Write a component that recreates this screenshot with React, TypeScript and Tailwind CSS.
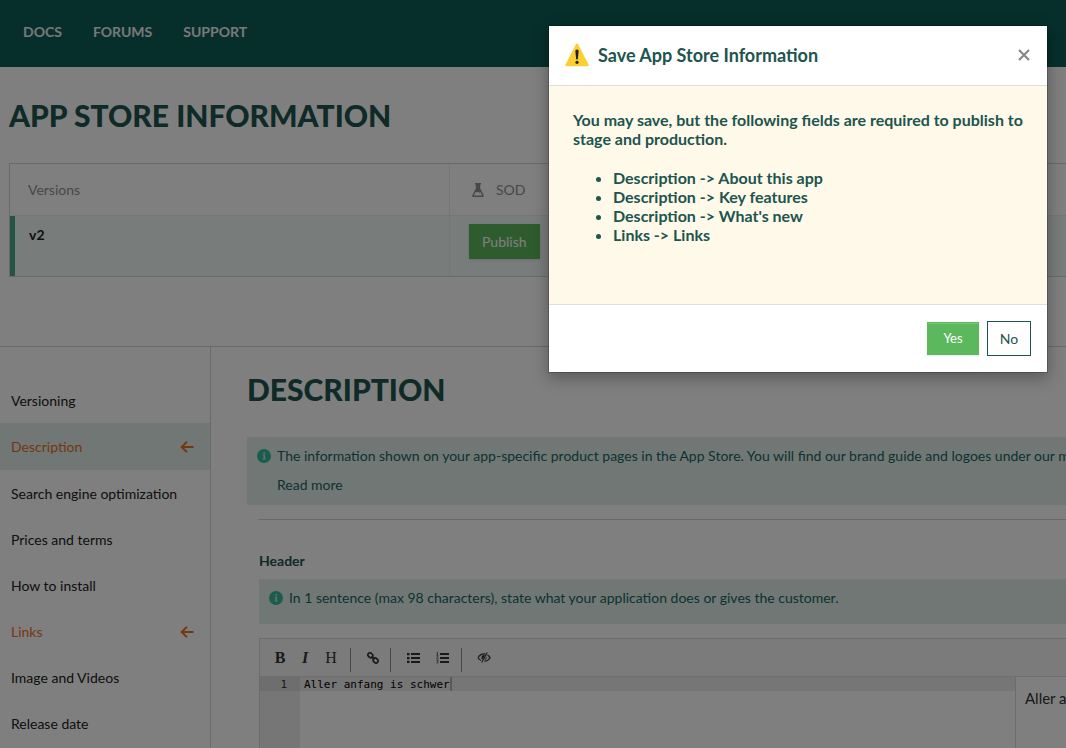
const sections = [
  { name: "Versioning" },
  { name: "Description", missing: true, active: true },
  { name: "Search engine optimization" },
  { name: "Prices and terms" },
  { name: "How to install" },
  { name: "Links", missing: true },
  { name: "Image and Videos" },
  { name: "Release date" },
];

const missingFields = [
  "Description -> About this app",
  "Description -> Key features",
  "Description -> What's new",
  "Links -> Links",
];

function InfoIcon() {
  return (
    <svg viewBox="0 0 14 14" className="h-3.5 w-3.5 shrink-0" aria-hidden="true">
      <circle cx="7" cy="7" r="7" fill="#34bb9b" />
      <path d="M6.400 3.300h1.500v1.400H6.400zM5.800 5.700h2.100v4h.7v.9H5.800v-.9h.7V6.600h-.7z" fill="#e2efeb" />
    </svg>
  );
}

function ArrowLeft() {
  return (
    <svg viewBox="0 0 14 12" className="h-3 w-3.5" fill="none" stroke="currentColor" strokeWidth="1.9" aria-hidden="true">
      <path d="M13.500 6H1.500M7 0.800L1.600 6 7 11.200" />
    </svg>
  );
}

function Flask() {
  return (
    <svg viewBox="0 0 12 14" className="h-3.5 w-3" aria-hidden="true">
      <path d="M3 0h6v1.500H8.200v4L11.600 12c.5 1.100-.1 2-1.200 2H1.600C.5 14-.1 13.100.4 12L3.800 5.500v-4H3z" fill="#909090" />
      <path d="M3.200 9.300h1.500L6 8.800l1.400 1 1.300-.5 1.400 3.200H1.900z" fill="#ffffff" />
    </svg>
  );
}

function LinkIcon() {
  return (
    <svg viewBox="0 0 12 12" className="h-3 w-3" fill="none" stroke="currentColor" strokeWidth="1.700" aria-hidden="true">
      <rect x="-2.600" y="-2" width="5.200" height="4" rx="1.700" transform="translate(3.400 3.300) rotate(45)" />
      <rect x="-2.600" y="-2" width="5.200" height="4" rx="1.700" transform="translate(8.600 8.500) rotate(45)" />
      <path d="M4.500 4.400l3 3" />
    </svg>
  );
}

function BulletList() {
  return (
    <svg viewBox="0 0 13 10" className="h-2.5 w-[13px]" fill="currentColor" aria-hidden="true">
      <path d="M0 0h2.500v2.200H0zM0 4h2.500v2.200H0zM0 7.800h2.500V10H0zM4 .1h9v1.900H4zM4 4.100h9V6H4zM4 8h9v1.900H4z" />
    </svg>
  );
}

function NumberList() {
  return (
    <svg viewBox="0 0 13 12" className="h-3 w-[13px]" fill="currentColor" aria-hidden="true">
      <path d="M4 1.100h9V3H4zM4 5.100h9V7H4zM4 9h9v1.900H4z" />
      <path d="M.5.700l1-.4V3.200M.4 3.300h2M.5 4.700c1.700-.7 2 .4.900 1.200l-.9.900h2M.5 8.400h1.700l-.8 1.100c1.500.2 1 2-.9 1.500" fill="none" stroke="currentColor" strokeWidth=".7" />
    </svg>
  );
}

function EyeSlash() {
  return (
    <svg viewBox="0 0 14 11" className="h-[11px] w-3.5" aria-hidden="true">
      <path d="M1 5.700C3 2.200 6 1.400 8.600 2M10.500 2.900c1.200.8 2 1.700 2.700 2.800-1.400 2.200-3.200 3.300-5.700 3.400M4 8.500C2.700 7.900 1.800 7 1 5.700" fill="none" stroke="currentColor" strokeWidth="1.200" />
      <path d="M8 3.200C5.800 2.600 4.300 4 4.500 6c0 .8.400 1.300.9 1.700zM9.600 4.500c.4 1.700-.6 3.200-2.200 3.500z" fill="currentColor" />
      <path d="M10.300.5L4.700 10.500" stroke="currentColor" strokeWidth="1.100" />
    </svg>
  );
}

function Warning() {
  return (
    <svg viewBox="0 0 24 24" className="h-6 w-6" aria-hidden="true">
      <path d="M10.900 1.200c.5-.9 1.700-.9 2.200 0l10.400 20.300c.4.900-.1 1.700-1.100 1.700H1.600c-1 0-1.500-.8-1.100-1.700z" fill="#fecf33" />
      <path d="M12 6.500c1.200 0 1.700.8 1.600 2l-.7 7.300c-.1 1.100-1.700 1.100-1.800 0l-.7-7.300c-.1-1.200.4-2 1.600-2z" fill="#222" />
      <circle cx="12" cy="19.300" r="1.600" fill="#222" />
    </svg>
  );
}

const tool = "flex h-9 items-center justify-center text-[#333]";

export default function App() {
  return (
    <div className="relative h-screen overflow-hidden bg-white font-[Lato,sans-serif] text-sm text-[#222]">
      <div className="flex h-full flex-col">
        <header className="h-[67px] shrink-0 bg-[#0c5e56]">
          <nav className="flex gap-[31px] px-[23px] pt-[22px] font-bold leading-5 text-[#f0f0f0]">
            <a href="#docs">DOCS</a>
            <a href="#forums">FORUMS</a>
            <a href="#support">SUPPORT</a>
          </nav>
        </header>

        <h1 className="mt-[30px] shrink-0 px-[9px] text-[30px] font-black leading-9 text-[#20544f]">APP STORE INFORMATION</h1>

        <div className="mt-[30px] ml-[9px] shrink-0 border border-r-0 border-[#d5d5d5]">
          <table className="w-full border-separate border-spacing-0 text-left">
            <thead className="text-[#8f8f8f]">
              <tr className="h-[52px]">
                <th className="w-[440px] border-r border-b border-[#ebeeee] pt-px pl-[18px] font-normal">Versions</th>
                <th className="border-b border-[#ebeeee] pt-px pl-[22px] font-normal">
                  <span className="flex items-center gap-3">
                    <Flask />
                    SOD
                  </span>
                </th>
              </tr>
            </thead>
            <tbody>
              <tr className="h-[60px] bg-[#f1f8f6] align-top">
                <td className="border-r border-l-[5px] border-r-[#ebeeee] border-l-[#46a88a] pt-[9px] pl-[14px] font-bold leading-5">
                  v2
                </td>
                <td className="pt-2 pl-[19px]">
                  <button className="h-[35px] border border-[#5cb85c] bg-[#5cb85c] px-3 text-white shadow-sm">Publish</button>
                </td>
              </tr>
            </tbody>
          </table>
        </div>

        <div className="mt-[69px] flex min-h-0 flex-1 border-t border-[#d5d5d5]">
          <aside className="w-[211px] shrink-0 border-r border-[#d5d5d5] pt-[30px]">
            {sections.map((s) => (
              <a
                key={s.name}
                href="#section"
                className={`flex items-center justify-between pr-4 pl-[11px] ${s.active ? "h-[47px] bg-[#e2efeb]" : "h-[46px] pt-0.5"} ${s.missing ? "text-[#ea6f22]" : ""}`}
              >
                {s.name}
                {s.missing && <ArrowLeft />}
              </a>
            ))}
          </aside>

          <main className="flex min-w-0 flex-1 flex-col pl-9">
            <h2 className="mt-6 shrink-0 text-[30px] font-black leading-9 text-[#20544f]">DESCRIPTION</h2>

            <div className="mt-[30px] flex h-[68px] shrink-0 gap-1.5 overflow-hidden bg-[#e2efeb] pt-3 pl-2.5 text-[#19665e]">
              <InfoIcon />
              <div className="-mt-2 whitespace-nowrap leading-[29px]">
                <p>
                  The information shown on your app-specific product pages in the App Store. You will find our brand guide and
                  logoes under our marketing material.
                </p>
                <a href="#more">Read more</a>
              </div>
            </div>

            <div className="mt-3.5 ml-3 flex min-h-0 flex-1 flex-col border-t border-[#d5d5d5] pt-[31px]">
              <label htmlFor="header-text" className="font-bold leading-5 text-[#20544f]">
                Header
              </label>
              <div className="mt-2 flex h-[45px] shrink-0 gap-1.5 bg-[#e2efeb] pt-3 pl-2.5 text-[#19665e]">
                <InfoIcon />
                <p className="-mt-[3px] leading-5">
                  In 1 sentence (max 98 characters), state what your application does or gives the customer.
                </p>
              </div>

              <div className="mt-3.5 flex min-h-0 flex-1 flex-col border-t border-l border-[#d9d9d9]">
                <div className="flex h-[38px] shrink-0 items-center border-b border-[#dedede] bg-[#f6f6f6] pl-[7px]">
                  <button aria-label="Bold" className={`${tool} w-[26px] font-[Liberation_Serif,serif] text-base font-bold`}>B</button>
                  <button aria-label="Italic" className={`${tool} w-6 font-[Liberation_Serif,serif] text-base font-bold italic`}>I</button>
                  <button aria-label="Heading" className={`${tool} w-7 font-[Liberation_Serif,serif] text-base`}>H</button>
                  <span className="mx-[5px] mt-1 h-6 border-l border-[#929292]" />
                  <button aria-label="Link" className={`${tool} w-[34px]`}><LinkIcon /></button>
                  <span className="mr-1 mt-1 h-6 border-l border-[#929292]" />
                  <button aria-label="Bulleted list" className={`${tool} w-9`}><BulletList /></button>
                  <button aria-label="Numbered list" className={`${tool} w-[22px]`}><NumberList /></button>
                  <span className="mr-1 ml-2 mt-1 h-6 border-l border-[#929292]" />
                  <button aria-label="Hide preview" className={`${tool} w-9`}><EyeSlash /></button>
                </div>
                <div className="flex min-h-0 flex-1">
                  <div className="w-10 bg-[#ececec] font-[DejaVu_Sans_Mono,monospace] text-[11px] leading-[15px] text-[#333]">
                    <div className="h-3.5 bg-[#dcdcdc] pr-[13px] text-right">1</div>
                  </div>
                  <div className="min-w-0 flex-1 font-[DejaVu_Sans_Mono,monospace] text-[11px] leading-[15px] text-black">
                    <div className="flex h-3.5 bg-[#ededed] pl-1">
                      <input id="header-text" defaultValue="Aller anfang is schwer" className="h-[15px] field-sizing-content outline-none" />
                      <span className="w-0.5 bg-[#b5b5b5]" />
                    </div>
                  </div>
                  <div className="w-[51px] overflow-hidden whitespace-nowrap border-l border-[#d9d9d9] pt-[11px] pl-[9px] text-[15px] leading-5 text-[#333]">
                    Aller anfang is schwer
                  </div>
                </div>
              </div>
            </div>
          </main>
        </div>
      </div>

      <div className="absolute inset-0 flex items-start justify-end bg-black/50 pt-[25px] pr-[18px]">
        <section
          role="dialog"
          aria-labelledby="dialog-title"
          className="w-[500px] border border-black/20 bg-white bg-clip-padding text-[#20544f] shadow-[0_5px_15px_rgba(0,0,0,0.3)]"
        >
          <header className="flex h-[60px] items-center border-b border-[#dee0e0] px-4 pb-px">
            <Warning />
            <h3 id="dialog-title" className="ml-[9px] flex-1 text-lg font-bold">Save App Store Information</h3>
            <button aria-label="Close" className="flex h-6 w-[15px] items-center justify-center text-[#888]">
              <svg viewBox="0 0 12 12" className="h-3 w-3" fill="none" stroke="currentColor" strokeWidth="2.200">
                <path d="M1 1l10 10M11 1L1 11" />
              </svg>
            </button>
          </header>
          <div className="h-[218px] bg-[#fff9e9] px-6 pt-6 text-base font-bold leading-[19px]">
            <p>You may save, but the following fields are required to publish to stage and production.</p>
            <ul className="mt-5 list-disc pl-10">
              {missingFields.map((f) => (
                <li key={f}>{f}</li>
              ))}
            </ul>
          </div>
          <footer className="flex h-[68px] items-center justify-end gap-2 border-t border-[#dee0e0] px-4">
            <button className="h-[33px] w-[52px] border border-[#5cb85c] bg-[#5cb85c] text-[13px] text-white shadow-[inset_0_1px_0_rgba(255,255,255,0.2),0_1px_2px_rgba(0,0,0,0.1)]">
              Yes
            </button>
            <button className="h-[35px] w-11 border border-[#20544f] bg-white text-sm">No</button>
          </footer>
        </section>
      </div>
    </div>
  );
}
